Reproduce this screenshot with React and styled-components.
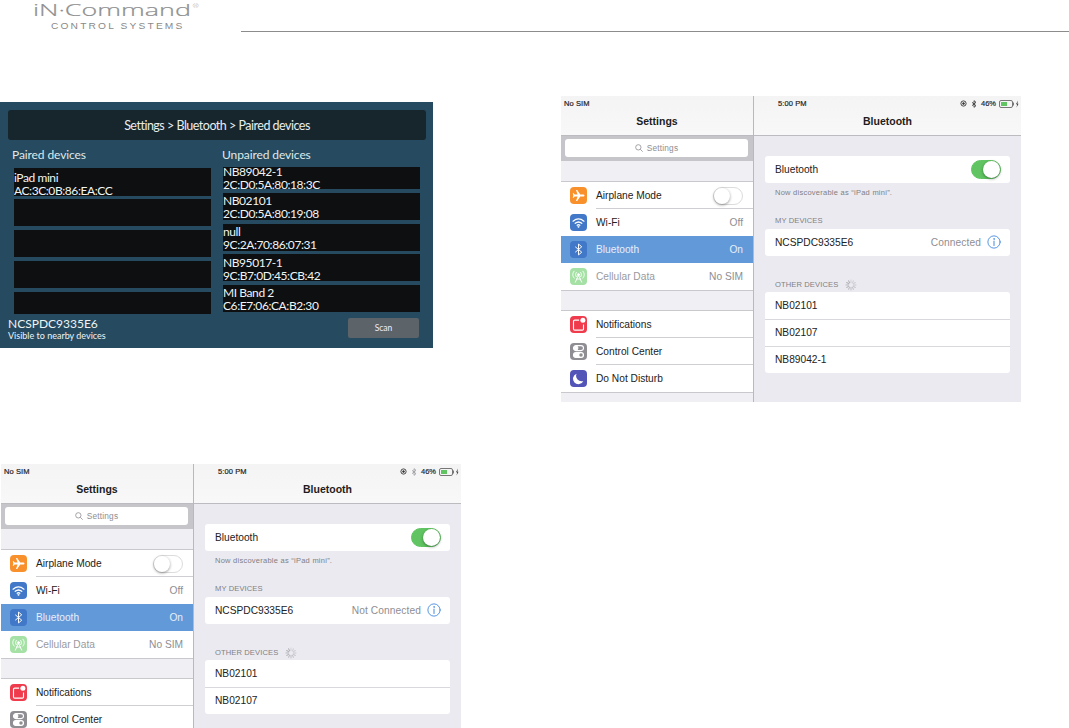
import React from "react";
import styled, { createGlobalStyle } from "styled-components";

const Global = createGlobalStyle`
  html, body { margin: 0; padding: 0; background: #fff; }
  body { font-family: "Liberation Sans", Arial, sans-serif; }
`;

const Page = styled.div`
  width: 1069px; height: 728px; overflow: hidden; background: #fff;
`;
const Header = styled.header`
  display: flex; height: 32px; padding-left: 33px; align-items: flex-end;
`;
const Logo = styled.div`
  width: 208px; height: 32px; flex: none; color: #8f8f8f;
`;
const LogoMark = styled.div`
  font-family: "Open Sans", sans-serif; font-weight: 300; font-size: 16px; line-height: 20px;
  height: 20px; white-space: nowrap; transform: scaleX(1.68); transform-origin: left center;
  -webkit-text-stroke: .2px #8f8f8f;
  sup { font-size: 4.5px; line-height: 0; vertical-align: 8px; margin-left: 1px; -webkit-text-stroke: 0; }
`;
const LogoSub = styled.div`
  font-family: "Liberation Sans", sans-serif; font-size: 8.5px; line-height: 9px; letter-spacing: 1.8px;
  margin: 2px 0 0 18px; white-space: nowrap; color: #8a8a8a; transform: scaleX(1.2); transform-origin: left center;
`;
const Rule = styled.div`
  flex: 1; height: 1px; background: #8c8c8c;
`;
const Content = styled.main`
  display: grid; grid-template-columns: 561px 460px;
`;
const LeftCol = styled.div`
  display: flex; flex-direction: column; align-items: flex-start; padding-top: 70px;
`;
const RightCol = styled.div`
  padding-top: 64px;
`;

/* Dark device panel */
const Panel = styled.section`
  width: 433px; height: 246px; background: #264a5f; box-sizing: border-box;
  padding: 8px 7px 0 8px; color: #eef4f4; font-family: Lato, sans-serif; margin-bottom: 116px;
`;
const PanelTitle = styled.div`
  height: 30px; background: #17252d; border-radius: 3px; display: flex; align-items: center; justify-content: center;
  font-size: 12.5px; letter-spacing: -.5px; color: #e8eeee;
`;
const Columns = styled.div`
  display: grid; grid-template-columns: 199px 197px; column-gap: 12px; margin: 7px 0 0 4px;
`;
const ColTitle = styled.div`
  font-size: 12px; line-height: 16px; color: #dfe9ea; height: 21px; letter-spacing: -.1px;
  margin-left: ${p => p.$shift}px;
`;
const ColList = styled.div`
  display: flex; flex-direction: column; height: 148px; margin-left: ${p => p.$inset}px;
  margin-top: ${p => p.$top}px;
`;
const Slot = styled.div`
  height: ${p => p.$h}px; margin-top: ${p => p.$gap}px; background: #0d0f10; flex: none; overflow: hidden;
  font-size: 12px; line-height: 12.5px; color: #f1f4f4; letter-spacing: -.42px;
  box-sizing: border-box; white-space: nowrap;
`;
const SlotLines = styled.div`
  margin-top: ${p => p.$shift}px;
`;
const PanelFooter = styled.div`
  display: flex; justify-content: space-between; align-items: flex-start; margin-top: 2px; padding-right: 7px;
`;
const Identity = styled.div`
  font-size: 12px; line-height: 13px; color: #eef4f4; margin-top: -1px;
  small { display: block; font-size: 9px; line-height: 11px; letter-spacing: 0; }
`;
const ScanButton = styled.div`
  width: 71px; height: 20px; background: #5c6369; border-radius: 2px; font-size: 8.5px;
  display: flex; align-items: center; justify-content: center; color: #eef;
`;

/* iPad screenshot */
const Tablet = styled.section`
  width: 460px; height: ${p => p.$h}px; overflow: hidden; display: grid; grid-template-columns: 193px 267px;
  margin-left: ${p => p.$x}px; font-family: "Liberation Sans", sans-serif; color: #222; font-size: 10.2px;
  background: #ebeaf1;
`;
const Sidebar = styled.div`
  background: #efeff4; border-right: 1px solid #b9b9bd; box-sizing: border-box; height: 306px;
`;
const Detail = styled.div`
  display: flex; flex-direction: column; height: 306px;
`;
const TopBar = styled.div`
  height: 39px; background: linear-gradient(#f4f4f5, #f8f8f8); border-bottom: 1px solid #bcbcc0;
  position: relative; display: flex; align-items: center; justify-content: center;
  font-size: 10.5px; color: #1d1d1d; flex: none;
  > b { margin-top: 11px; font-weight: 700; }
`;
const StatusText = styled.span`
  position: absolute; top: 3px; left: ${p => p.$left}px; font-size: 7.5px; line-height: 9px; font-weight: 400;
  -webkit-text-stroke: .2px #222; letter-spacing: .1px;
`;
const StatusRight = styled.div`
  position: absolute; top: 3px; right: 2px; display: flex; align-items: center; gap: 3px; font-size: 7.5px; line-height: 9px;
  font-weight: 400; -webkit-text-stroke: .2px #333;
`;
const SearchWell = styled.div`
  background: #c5c5ca; height: 25px; padding: 3px 4px 0; box-sizing: border-box;
`;
const SearchField = styled.div`
  height: 18px; background: #fff; border-radius: 3px; display: flex; align-items: center; justify-content: center; gap: 4px;
  font-size: 8.3px; color: #8e8e93; letter-spacing: .2px; width: 183px;
`;
const Group = styled.div`
  margin-top: ${p => p.$top}px; border-top: 1px solid #c9c9cd; border-bottom: 1px solid #c9c9cd; background: #fff;
`;
const Row = styled.div`
  height: 27px; display: flex; align-items: center; box-sizing: border-box; padding: 0 10px 0 9px;
  background: ${p => (p.$active ? "#6299d9" : "#fff")};
  color: ${p => (p.$active ? "#e6effa" : p.$dim ? "#9a9a9e" : "#222")};
`;
const RowDivider = styled.div`
  height: 1px; background: #cfcfd3; margin-left: 35px; margin-top: -1px; position: relative;
`;
const IconBox = styled.span`
  width: 17px; height: 17px; border-radius: 4px; background: ${p => p.$bg}; flex: none; margin-right: 9px;
  display: flex; align-items: center; justify-content: center;
`;
const RowLabel = styled.span` flex: 1; `;
const RowValue = styled.span`
  color: ${p => (p.$active ? "#e6effa" : "#8e8e93")};
`;
const Toggle = styled.span`
  width: 30px; height: ${p => (p.$on ? 19 : 18)}px; border-radius: 10px; box-sizing: border-box; position: relative; flex: none;
  background: ${p => (p.$on ? "#5fc461" : "#fff")};
  border: 1px solid ${p => (p.$on ? "#5fc461" : "#dcdcdf")};
  margin-left: ${p => (p.$on ? "auto" : "0")};
  &::after {
    content: ""; position: absolute; top: 0; ${p => (p.$on ? "right: 0" : "left: 0")};
    width: ${p => (p.$on ? 17 : 16)}px; height: ${p => (p.$on ? 17 : 16)}px; border-radius: 50%; background: #fff;
    box-shadow: 0 1px 3px rgba(0,0,0,.4);
  }
`;
const DetailBody = styled.div`
  padding: 20px 11px 0 11px; flex: 1;
`;
const Card = styled.div`
  background: #fff; border-radius: 3px; width: 245px;
`;
const CardRow = styled.div`
  height: 27px; display: flex; align-items: center; padding: 0 9px 1px 10px; box-sizing: border-box; color: #222;
  border-top: ${p => (p.$line ? "1px solid #d9d9dd" : "none")};
`;
const Note = styled.div`
  font-size: 7.5px; line-height: 10px; color: #7f7f84; padding: 5px 0 0 10px; height: 19px; box-sizing: border-box; letter-spacing: .25px;
`;
const SectionLabel = styled.div`
  display: flex; align-items: center; gap: 7px; font-size: 7.6px; line-height: 10px; color: #7f7f84; padding-left: 10px;
  height: ${p => p.$h}px; box-sizing: border-box; letter-spacing: .1px; padding-top: ${p => p.$pad}px;
`;
const Status = styled.span`
  margin-left: auto; color: #8e8e93; margin-right: 6px; letter-spacing: .1px;
`;

const Plane = () => (
  <svg width="13" height="13" viewBox="0 0 24 24" fill="#fff"><path d="M23 12c0-1-1-1.8-2.4-1.8h-5.4L9.6 2H7.4l2.9 8.2H5L3.2 7.8H1.4L2.6 12 1.4 16.2h1.8L5 13.8h5.3L7.4 22h2.2l5.6-8.2h5.4C22 13.8 23 13 23 12z"/></svg>
);
const Wifi = () => (
  <svg width="13" height="13" viewBox="0 0 24 24" fill="none" stroke="#fff" strokeWidth="2.4" strokeLinecap="round"><path d="M2 9.5c6-5 14-5 20 0"/><path d="M6 13.5c3.6-3 8.4-3 12 0"/><path d="M9.5 17c1.5-1.2 3.5-1.2 5 0"/><circle cx="12" cy="19.8" r=".6" fill="#fff"/></svg>
);
const Bt = ({ c = "#fff", s = 13, w = 1.8 }) => (
  <svg width={s} height={s} viewBox="0 0 24 24" fill="none" stroke={c} strokeWidth={w} strokeLinejoin="round"><path d="M6 7l12 10-6 5V2l6 5L6 17"/></svg>
);
const Cell = () => (
  <svg width="15" height="15" viewBox="0 0 24 24" fill="none" stroke="#fff" strokeWidth="1.5" strokeLinecap="round"><circle cx="12" cy="9" r="1.6" fill="#fff"/><path d="M12 10l-5 11M12 10l5 11M9 16h6"/><path d="M8.5 5.5c-1.6 2-1.6 5 0 7M15.5 5.5c1.6 2 1.6 5 0 7M5 3.5c-3 3.500-3 7.500 0 11M19 3.500c3 3.500 3 7.500 0 11"/></svg>
);
const Notif = () => (
  <svg width="15" height="15" viewBox="0 0 24 24" fill="none"><path d="M13 5H6a2 2 0 0 0-2 2v12a2 2 0 0 0 2 2h12a2 2 0 0 0 2-2v-7" stroke="#fff" strokeWidth="1.8"/><circle cx="19" cy="5" r="4" fill="#fff"/></svg>
);
const Control = () => (
  <svg width="15" height="15" viewBox="0 0 24 24" fill="none" stroke="#fff" strokeWidth="1.8"><rect x="4" y="2.500" width="16" height="8" rx="4"/><circle cx="8" cy="6.500" r="3" fill="#fff"/><rect x="4" y="13.500" width="16" height="8" rx="4" fill="#fff"/><circle cx="16" cy="17.500" r="2.800" fill="#8e8e93" stroke="none"/></svg>
);
const Moon = () => (
  <svg width="13" height="13" viewBox="0 0 24 24" fill="#fff"><path d="M21 16.500A10 10 0 0 1 8.500 3 10 10 0 1 0 21 16.500z"/></svg>
);
const Mag = () => (
  <svg width="8" height="8" viewBox="0 0 24 24" fill="none" stroke="#8e8e93" strokeWidth="2.400"><circle cx="10" cy="10" r="8"/><path d="M16 16l7 7"/></svg>
);
const Info = () => (
  <svg width="14" height="14" viewBox="0 0 24 24" fill="none" stroke="#3f87e0" strokeWidth="1.500" strokeLinecap="round"><circle cx="12" cy="12" r="10.500"/><path d="M12 10.500V18" strokeWidth="1.700"/><circle cx="12" cy="6.800" r=".5" fill="#3f87e0"/></svg>
);
const Spinner = () => (
  <svg width="12" height="12" viewBox="0 0 24 24" stroke="#a9a9ad" strokeWidth="2" strokeLinecap="round">
    {Array.from({ length: 12 }, (_, i) => (
      <line key={i} x1="12" y1="2" x2="12" y2="7" transform={`rotate(${i * 30} 12 12)`} opacity={0.35 + i * 0.05} />
    ))}
  </svg>
);
const Lock = () => (
  <svg width="7" height="7" viewBox="0 0 24 24" fill="none" stroke="#333" strokeWidth="3"><circle cx="12" cy="12" r="9"/><circle cx="12" cy="12" r="3" fill="#333"/></svg>
);
const Battery = () => (
  <svg width="20" height="8" viewBox="0 0 20 8"><rect x=".5" y=".5" width="13" height="7" rx="1.500" fill="none" stroke="#777"/><rect x="2" y="2" width="6" height="4" fill="#5fc461"/><rect x="14" y="2.500" width="1" height="3" fill="#777"/><path d="M19 .5L17 4.300h1.200L17.500 7.500l2-3.800h-1.200z" fill="#333"/></svg>
);

const menuTop = [
  { label: "Airplane Mode", bg: "#f8912b", icon: <Plane />, toggle: true },
  { label: "Wi-Fi", bg: "#4178c8", icon: <Wifi />, value: "Off" },
  { label: "Bluetooth", bg: "#4178c8", icon: <Bt />, value: "On", active: true },
  { label: "Cellular Data", bg: "#a5e0a5", icon: <Cell />, value: "No SIM", dim: true },
];
const menuBottom = [
  { label: "Notifications", bg: "#ef3b4b", icon: <Notif /> },
  { label: "Control Center", bg: "#8e8e93", icon: <Control /> },
  { label: "Do Not Disturb", bg: "#5354b8", icon: <Moon /> },
];

const MenuGroup = ({ items, top }) => (
  <Group $top={top}>
    {items.map((it, i) => (
      <React.Fragment key={it.label}>
        <Row $active={it.active} $dim={it.dim}>
          <IconBox $bg={it.bg}>{it.icon}</IconBox>
          <RowLabel>{it.label}</RowLabel>
          {it.toggle && <Toggle />}
          {it.value && <RowValue $active={it.active}>{it.value}</RowValue>}
        </Row>
        {i < items.length - 1 && !items[i].active && !items[i + 1].active && <RowDivider />}
      </React.Fragment>
    ))}
  </Group>
);

const IPad = ({ status, others, height, x, btColor }) => (
  <Tablet $h={height} $x={x}>
    <Sidebar>
      <TopBar><StatusText $left={3}>No SIM</StatusText><b>Settings</b></TopBar>
      <SearchWell><SearchField><Mag />Settings</SearchField></SearchWell>
      <MenuGroup items={menuTop} top={20} />
      <MenuGroup items={menuBottom} top={19} />
    </Sidebar>
    <Detail>
      <TopBar>
        <StatusText $left={24}>5:00 PM</StatusText>
        <StatusRight><Lock /><Bt c={btColor} s={8} w={2.500} /><span>46%</span><Battery /></StatusRight>
        <b>Bluetooth</b>
      </TopBar>
      <DetailBody>
        <Card><CardRow>Bluetooth<Toggle $on /></CardRow></Card>
        <Note>Now discoverable as “iPad mini”.</Note>
        <SectionLabel $h={27} $pad={10}>MY DEVICES</SectionLabel>
        <Card><CardRow>NCSPDC9335E6<Status>{status}</Status><Info /></CardRow></Card>
        <SectionLabel $h={36} $pad={22}>OTHER DEVICES<Spinner /></SectionLabel>
        <Card>
          {others.map((d, i) => <CardRow key={d} $line={i > 0}>{d}</CardRow>)}
        </Card>
      </DetailBody>
    </Detail>
  </Tablet>
);

const paired = [
  { h: 28, gap: 0, shift: 4, lines: ["iPad mini", "AC:3C:0B:86:EA:CC"] },
  { h: 27, gap: 3 }, { h: 27, gap: 4 }, { h: 27, gap: 4 }, { h: 22, gap: 4 },
];
const unpaired = [
  { h: 22, gap: 0, shift: -1, lines: ["NB89042-1", "2C:D0:5A:80:18:3C"] },
  { h: 27, gap: 4, shift: 2, lines: ["NB02101", "2C:D0:5A:80:19:08"] },
  { h: 27, gap: 4, shift: 2, lines: ["null", "9C:2A:70:86:07:31"] },
  { h: 27, gap: 3, shift: 3, lines: ["NB95017-1", "9C:B7:0D:45:CB:42"] },
  { h: 27, gap: 4, shift: 2, lines: ["MI Band 2", "C6:E7:06:CA:B2:30"] },
];

const Slots = ({ items }) => items.map((s, i) => (
  <Slot key={i} $h={s.h} $gap={s.gap}>
    {s.lines && <SlotLines $shift={s.shift}>{s.lines[0]}<br />{s.lines[1]}</SlotLines>}
  </Slot>
));

export default function App() {
  return (
    <Page>
      <Global />
      <Header>
        <Logo>
          <LogoMark>iN·Command<sup>®</sup></LogoMark>
          <LogoSub>CONTROL SYSTEMS</LogoSub>
        </Logo>
        <Rule />
      </Header>
      <Content>
        <LeftCol>
          <Panel>
            <PanelTitle>Settings &gt; Bluetooth &gt; Paired devices</PanelTitle>
            <Columns>
              <div>
                <ColTitle $shift={0}>Paired devices</ColTitle>
                <ColList $inset={2} $top={0}><Slots items={paired} /></ColList>
              </div>
              <div>
                <ColTitle $shift={-1}>Unpaired devices</ColTitle>
                <ColList $inset={0} $top={-1}><Slots items={unpaired} /></ColList>
              </div>
            </Columns>
            <PanelFooter>
              <Identity>NCSPDC9335E6<small>Visible to nearby devices</small></Identity>
              <ScanButton>Scan</ScanButton>
            </PanelFooter>
          </Panel>
          <IPad x={1} height={264} status="Not Connected" others={["NB02101", "NB02107"]} btColor="#9a9a9e" />
        </LeftCol>
        <RightCol>
          <IPad x={0} height={306} status="Connected" others={["NB02101", "NB02107", "NB89042-1"]} btColor="#333" />
        </RightCol>
      </Content>
    </Page>
  );
}
